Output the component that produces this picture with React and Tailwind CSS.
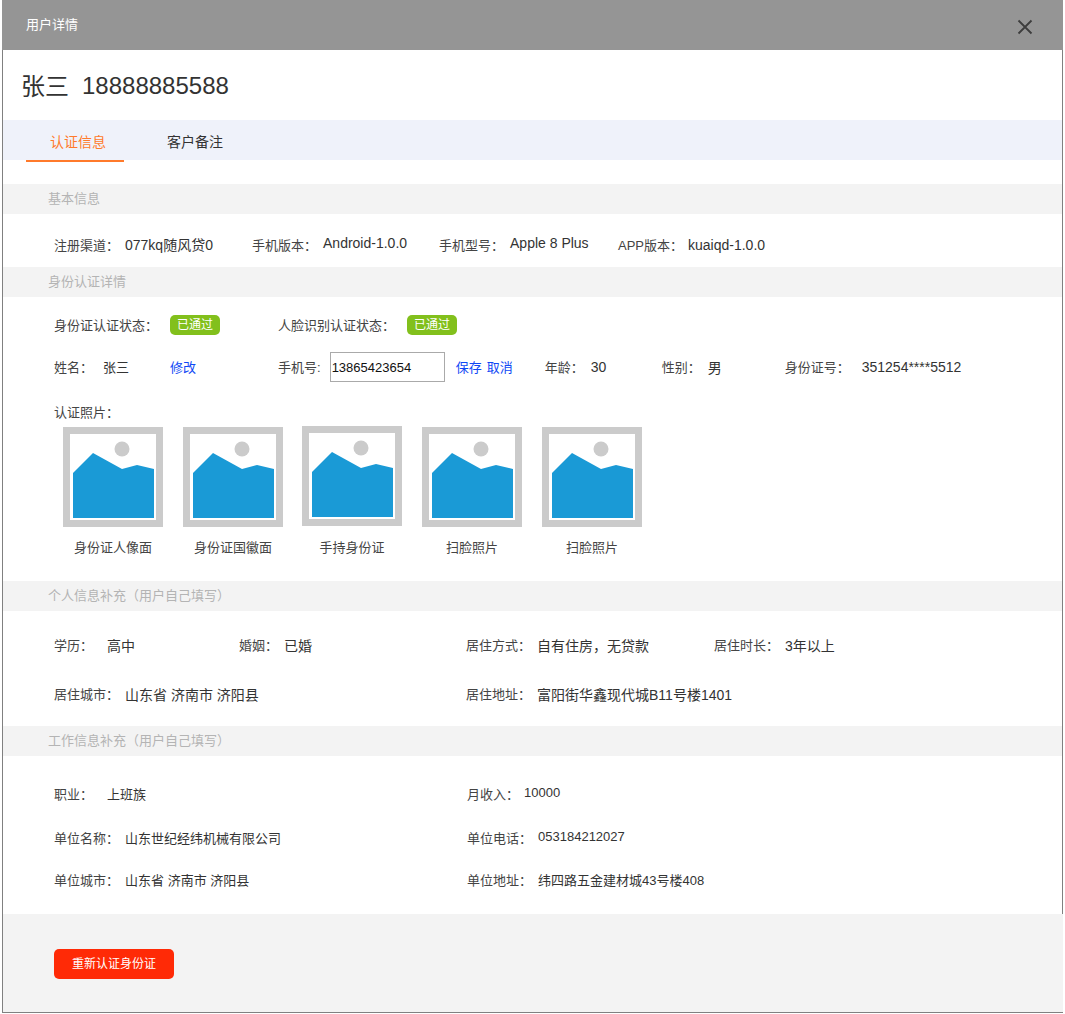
import React from "react";

const SectionTitle = ({ children }) => (
  <div className="h-[30px] bg-[#f3f3f3] pl-[45px] leading-[30px] text-[#b4b4b4]">{children}</div>
);

const Field = ({ label, value, gap = "ml-[6px]", w = "", big = false, valueUp = false }) => (
  <div className={`flex items-center ${w}`}>
    <span className="text-[#444]">{label}</span>
    <span className={`text-[#333] ${gap} ${big ? "text-[14px]" : ""} ${valueUp ? "-translate-y-[2px]" : ""}`}>{value}</span>
  </div>
);

const Badge = () => (
  <span className="h-5 w-[50px] rounded-[5px] bg-[#82c01c] text-center text-[12px] leading-5 text-white">已通过</span>
);

const Photo = ({ caption, shift = "", right = "mr-[20px]" }) => (
  <div className={`flex w-[100px] flex-col items-center ${right}`}>
    <div className={`h-[100px] w-[100px] border-[7px] border-[#cbcbcb] bg-white ${shift}`}>
      <svg viewBox="0 0 86 86" className="h-full w-full">
        <circle cx="52" cy="15" r="7.5" fill="#cbcbcb" />
        <path d="M3 39 L23 19 L52 35 L67 31 L84 35 L84 84 L3 84 Z" fill="#1a9ad6" />
      </svg>
    </div>
    <div className="mt-[12px] whitespace-nowrap leading-[18px] text-[#444]">{caption}</div>
  </div>
);

const App = () => (
  <div className="h-[1014px] w-[1065px] bg-white pl-[2px] font-['Liberation_Sans','Noto_Sans_CJK_SC',sans-serif] text-[13px]">
    <div className="h-[1013px] w-[1061px] border-b border-[#808080]">
      <div className="flex h-[50px] items-center justify-between bg-[#959595] pr-[30px] pl-[24px] text-white">
        <span>用户详情</span>
        <svg viewBox="0 0 16 16" className="mt-[4px] h-[16px] w-[16px]" fill="none" stroke="#3d3d3d" strokeWidth="1.8">
          <path d="M1.5 1.5 L14.5 14.5 M14.5 1.5 L1.5 14.5" />
        </svg>
      </div>

      <div className="border-l border-[#808080]">
        <div className="border-r border-[#808080]">
          <div className="flex h-[70px] items-center pt-[4px] pl-[18px] text-[24px] text-[#333]">
            <span>张三</span>
            <span className="ml-[13px] -translate-y-[1px]">18888885588</span>
          </div>

          <div className="flex h-10 bg-[#eff2fa] pl-[23px] text-[14px]">
            <div className="h-[42px] w-[98px] border-b-2 border-[#ff7a2b] pl-[24px] leading-[44px] text-[#ff7a2b]">认证信息</div>
            <div className="ml-[43px] leading-[44px] text-[#333]">客户备注</div>
          </div>

          <div className="h-6" />
          <SectionTitle>基本信息</SectionTitle>
          <div className="flex h-[53px] items-center pt-[10px] pl-[51px]">
            <Field w="w-[198px]" label="注册渠道：" value="077kq随风贷0" big />
            <Field w="w-[187px]" label="手机版本：" value="Android-1.0.0" big valueUp />
            <Field w="w-[179px]" label="手机型号：" value="Apple 8 Plus" big valueUp />
            <Field label="APP版本：" gap="ml-[5px]" value="kuaiqd-1.0.0" big />
          </div>

          <SectionTitle>身份认证详情</SectionTitle>
          <div className="flex h-[56px] items-center pl-[51px]">
            <div className="flex w-[224px] items-center">
              <span className="mt-[1px] w-[116px] text-[#444]">身份证认证状态：</span>
              <Badge />
            </div>
            <span className="mt-[1px] w-[129px] text-[#444]">人脸识别认证状态：</span>
            <Badge />
          </div>
          <div className="flex h-[30px] items-center pl-[51px]">
            <span className="w-[49px] text-[#444]">姓名：</span>
            <span className="w-[67px] text-[#333]">张三</span>
            <span className="w-[108px] text-[#0f48f5]">修改</span>
            <span className="text-[#444]">手机号:</span>
            <input
              readOnly
              value="13865423654"
              className="ml-[9px] h-[30px] w-[115px] -translate-y-[1px] border border-[#aaa] pl-[1px] text-[#111] outline-none"
            />
            <span className="ml-[11px] text-[#0f48f5]">保存</span>
            <span className="ml-[5px] text-[#0f48f5]">取消</span>
            <span className="ml-[32px] text-[#444]">年龄：</span>
            <span className="ml-[7px] w-[71px] -translate-y-[1px] text-[14px] text-[#333]">30</span>
            <span className="text-[#444]">性别：</span>
            <span className="ml-[7px] w-[77px] text-[14px] text-[#333]">男</span>
            <span className="text-[#444]">身份证号：</span>
            <span className="ml-[12px] -translate-y-[1px] text-[14px] text-[#333]">351254****5512</span>
          </div>
          <div className="mt-[20px] pl-[51px] leading-[20px] text-[#444]">认证照片：</div>
          <div className="mt-[4px] flex h-[154px] pl-[60px]">
            <Photo caption="身份证人像面" />
            <Photo caption="身份证国徽面" right="mr-[19px]" />
            <Photo caption="手持身份证" shift="-translate-y-[1px]" />
            <Photo caption="扫脸照片" />
            <Photo caption="扫脸照片" />
          </div>

          <SectionTitle>个人信息补充（用户自己填写）</SectionTitle>
          <div className="flex h-[70px] items-center pl-[51px]">
            <Field w="w-[185px]" label="学历：" gap="ml-[14px]" value="高中" big />
            <Field w="w-[227px]" label="婚姻：" value="已婚" big />
            <Field w="w-[248px]" label="居住方式：" value="自有住房，无贷款" big />
            <Field label="居住时长：" value="3年以上" big />
          </div>
          <div className="flex h-[28px] items-center pl-[51px]">
            <Field w="w-[412px]" label="居住城市：" value="山东省 济南市 济阳县" big />
            <Field label="居住地址：" value="富阳街华鑫现代城B11号楼1401" big />
          </div>
          <div className="h-[17px]" />

          <SectionTitle>工作信息补充（用户自己填写）</SectionTitle>
          <div className="flex h-[76px] items-center pt-[2px] pl-[51px]">
            <Field w="w-[413px]" label="职业：" gap="ml-[14px]" value="上班族" />
            <Field label="月收入：" gap="ml-[5px]" value="10000" valueUp />
          </div>
          <div className="flex h-[12px] items-center pt-[2px] pl-[51px]">
            <Field w="w-[413px]" label="单位名称：" value="山东世纪经纬机械有限公司" />
            <Field label="单位电话：" value="053184212027" valueUp />
          </div>
          <div className="flex h-[70px] items-center pt-[4px] pl-[51px]">
            <Field w="w-[413px]" label="单位城市：" value="山东省 济南市 济阳县" />
            <Field label="单位地址：" value="纬四路五金建材城43号楼408" />
          </div>
        </div>

        <div className="h-[98px] bg-[#f3f3f3] pt-[35px] pl-[51px]">
          <button className="h-[30px] w-[120px] rounded-[5px] bg-[#ff2a06] text-[12px] text-white">重新认证身份证</button>
        </div>
      </div>
    </div>
  </div>
);

export default App;
